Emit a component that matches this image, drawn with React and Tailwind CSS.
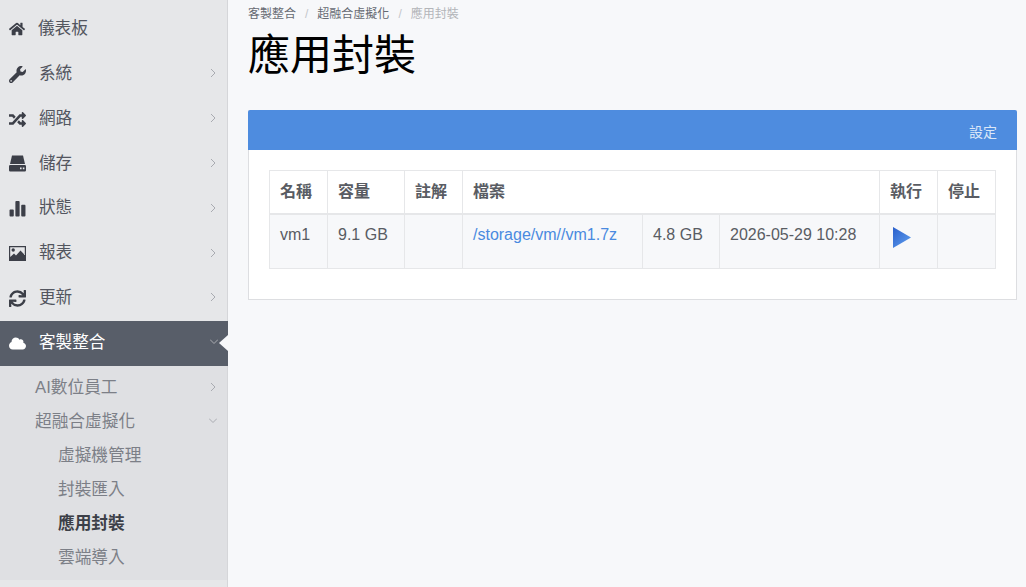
import React from "react";
import { FaHome, FaWrench, FaRandom, FaSync, FaCloud } from "react-icons/fa";

function Chevron({ down, className = "" }) {
  return (
    <svg width="8" height="10" viewBox="0 0 8 10" className={`-translate-y-px ${className}`} fill="none" stroke="#a9abb1" strokeWidth="1">
      {down ? <path d="M0 2.5 L4 6.5 L8 2.5" /> : <path d="M2 1 L6 5 L2 9" />}
    </svg>
  );
}

function Bars({ size = 16 }) {
  return (
    <svg width={size} height={size} viewBox="0 0 16 16" fill="currentColor">
      <rect x="0.5" y="9" width="4" height="6.5" rx="0.8" />
      <rect x="6" y="1" width="4" height="14.5" rx="0.8" />
      <rect x="11.5" y="4.5" width="4" height="11" rx="0.8" />
    </svg>
  );
}

function Hdd({ size = 17 }) {
  return (
    <svg width={size} height={size} viewBox="0 0 17 17" fill="currentColor">
      <path d="M3 0.5 H14 L16 9 H1 Z" />
      <path fillRule="evenodd" d="M1.2 10 H15.8 Q17 10 17 11.2 V15.3 Q17 16.5 15.8 16.5 H1.2 Q0 16.5 0 15.3 V11.2 Q0 10 1.2 10 Z M11 12.5 V14.3 H12.6 V12.5 Z M13.8 12.5 V14.3 H15.4 V12.5 Z" />
    </svg>
  );
}

function Pic({ size = 17 }) {
  return (
    <svg width={size} height={size} viewBox="0 0 17 17" fill="currentColor">
      <path fillRule="evenodd" d="M0 1 H17 V16 H0 Z M1.2 2.2 V12 L5 8.6 L7 10.4 L11.5 5.5 L15.8 10 V2.2 Z" />
      <circle cx="4.2" cy="5" r="1.7" />
    </svg>
  );
}

const items = [
  { t: "儀表板", I: FaHome, s: 16, nochev: true, ml: "ml-[12px]" },
  { t: "系統", I: FaWrench, s: 17, ml: "ml-[13px]" },
  { t: "網路", I: FaRandom, s: 17, ml: "ml-[13px]" },
  { t: "儲存", I: Hdd, s: 17, ml: "ml-[13px]" },
  { t: "狀態", I: Bars, s: 17, ml: "ml-[13px]" },
  { t: "報表", I: Pic, s: 17, ml: "ml-[13px]" },
  { t: "更新", I: FaSync, s: 17, ml: "ml-[13px]" },
];

function Row({ it }) {
  const { t, I, s, nochev, ml } = it;
  return (
    <div className="flex h-[44.857px] items-center pl-[9px] pr-[10px] text-[16.6px] text-[#53565f]">
      <span className="flex w-[17px] justify-start text-[#3c3f48]"><I size={s} /></span>
      <span className={`${ml} flex-1`}>{t}</span>
      {!nochev && <Chevron />}
    </div>
  );
}

export default function App() {
  return (
    <div className="flex h-[587px] w-[1026px] overflow-hidden bg-[#f7f8fa] font-['Liberation_Sans','Noto_Sans_CJK_TC',sans-serif]">
      <aside className="flex w-[228px] shrink-0 flex-col border-r border-[#d5d6d9] bg-[#e6e7e9] pt-[7px]">
        {items.map((it) => <Row key={it.t} it={it} />)}
        <div className="relative mr-[-1px] flex h-[45px] items-center bg-[#585e69] pl-[9px] pr-[11px] text-[16.6px] text-white">
          <span className="flex w-[17px] justify-start"><FaCloud size={17} /></span>
          <span className="ml-[13px] flex-1">客製整合</span>
          <Chevron down className="mr-[-1px]" />
          <span className="absolute right-0 top-1/2 h-0 w-0 -translate-y-1/2 border-y-[8px] border-r-[9px] border-y-transparent border-r-[#f7f8fa]" />
        </div>
        <div className="flex h-[214px] flex-col bg-[#dfe0e3] pt-[5px] text-[16.7px] text-[#7c7f87]">
          <div className="flex h-[34px] items-center pl-[35px] pr-[10px]">
            <span className="flex-1">AI數位員工</span><Chevron />
          </div>
          <div className="flex h-[34px] items-center pl-[35px] pr-[10px]">
            <span className="flex-1">超融合虛擬化</span><Chevron down />
          </div>
          <div className="flex h-[34px] items-center pl-[58px]">虛擬機管理</div>
          <div className="flex h-[34px] items-center pl-[58px]">封裝匯入</div>
          <div className="flex h-[34px] items-center pl-[58px] font-bold text-[#3c3f48]">應用封裝</div>
          <div className="flex h-[34px] items-center pl-[58px]">雲端導入</div>
        </div>
      </aside>

      <main className="min-w-0 flex-1 pl-[20px] pr-[9px]">
        <div className="flex h-[14px] items-center pt-[14px] text-[12px] leading-none text-[#666a72]">
          <span>客製整合</span>
          <span className="mx-[9px] text-[#c4c6ca]">/</span>
          <span>超融合虛擬化</span>
          <span className="mx-[9px] text-[#c4c6ca]">/</span>
          <span className="text-[#b3b5b9]">應用封裝</span>
        </div>
        <h1 className="mt-[17px] h-[57px] text-[42px] font-normal leading-[50px] text-black">應用封裝</h1>

        <section className="mt-[22px] h-[190px] rounded-t-[2px] border border-t-0 border-[#dddee1] bg-white">
          <div className="-mx-px flex h-[40px] items-center justify-end rounded-t-[2px] bg-[#4e8cdf] pr-[20px] pt-[5px] text-[14px] text-[#dbe7f7]">
            設定
          </div>
          <div className="px-[20px] pt-[20px]">
            <table className="w-[726px] table-fixed border-collapse text-[16px] text-[#595c63]">
              <colgroup>
                <col className="w-[58px]" />
                <col className="w-[77px]" />
                <col className="w-[58px]" />
                <col className="w-[180px]" />
                <col className="w-[77px]" />
                <col className="w-[160px]" />
                <col className="w-[58px]" />
                <col className="w-[58px]" />
              </colgroup>
              <thead>
                <tr className="h-[43px] bg-white text-left text-[16px] font-bold">
                  <th className="border border-b-2 border-[#e6e7e9] px-[10px] font-bold">名稱</th>
                  <th className="border border-b-2 border-[#e6e7e9] px-[10px] font-bold">容量</th>
                  <th className="border border-b-2 border-[#e6e7e9] px-[10px] font-bold">註解</th>
                  <th colSpan={3} className="border border-b-2 border-[#e6e7e9] px-[10px] font-bold">檔案</th>
                  <th className="border border-b-2 border-[#e6e7e9] px-[10px] font-bold">執行</th>
                  <th className="border border-b-2 border-[#e6e7e9] px-[10px] font-bold">停止</th>
                </tr>
              </thead>
              <tbody>
                <tr className="h-[55px] bg-[#f7f8fa] align-top">
                  <td className="border border-[#e6e7e9] px-[10px] pt-[8px]">vm1</td>
                  <td className="border border-[#e6e7e9] px-[10px] pt-[8px]">9.1 GB</td>
                  <td className="border border-[#e6e7e9] px-[10px] pt-[8px]"></td>
                  <td className="border border-[#e6e7e9] px-[10px] pt-[8px] text-[#4a8ae0]">/storage/vm//vm1.7z</td>
                  <td className="border border-[#e6e7e9] px-[10px] pt-[8px]">4.8 GB</td>
                  <td className="whitespace-nowrap border border-[#e6e7e9] px-[10px] pt-[8px]">2026-05-29 10:28</td>
                  <td className="border border-[#e6e7e9] px-[13px] pt-[12px]">
                    <svg width="18" height="21" viewBox="0 0 18 21">
                      <defs>
                        <linearGradient id="g" x1="0" y1="0" x2="1" y2="1">
                          <stop offset="0" stopColor="#2a5fcb" />
                          <stop offset="1" stopColor="#62a2f0" />
                        </linearGradient>
                      </defs>
                      <path d="M0 0 L18 10.5 L0 21 Z" fill="url(#g)" />
                    </svg>
                  </td>
                  <td className="border border-[#e6e7e9]"></td>
                </tr>
              </tbody>
            </table>
          </div>
        </section>
      </main>
    </div>
  );
}
